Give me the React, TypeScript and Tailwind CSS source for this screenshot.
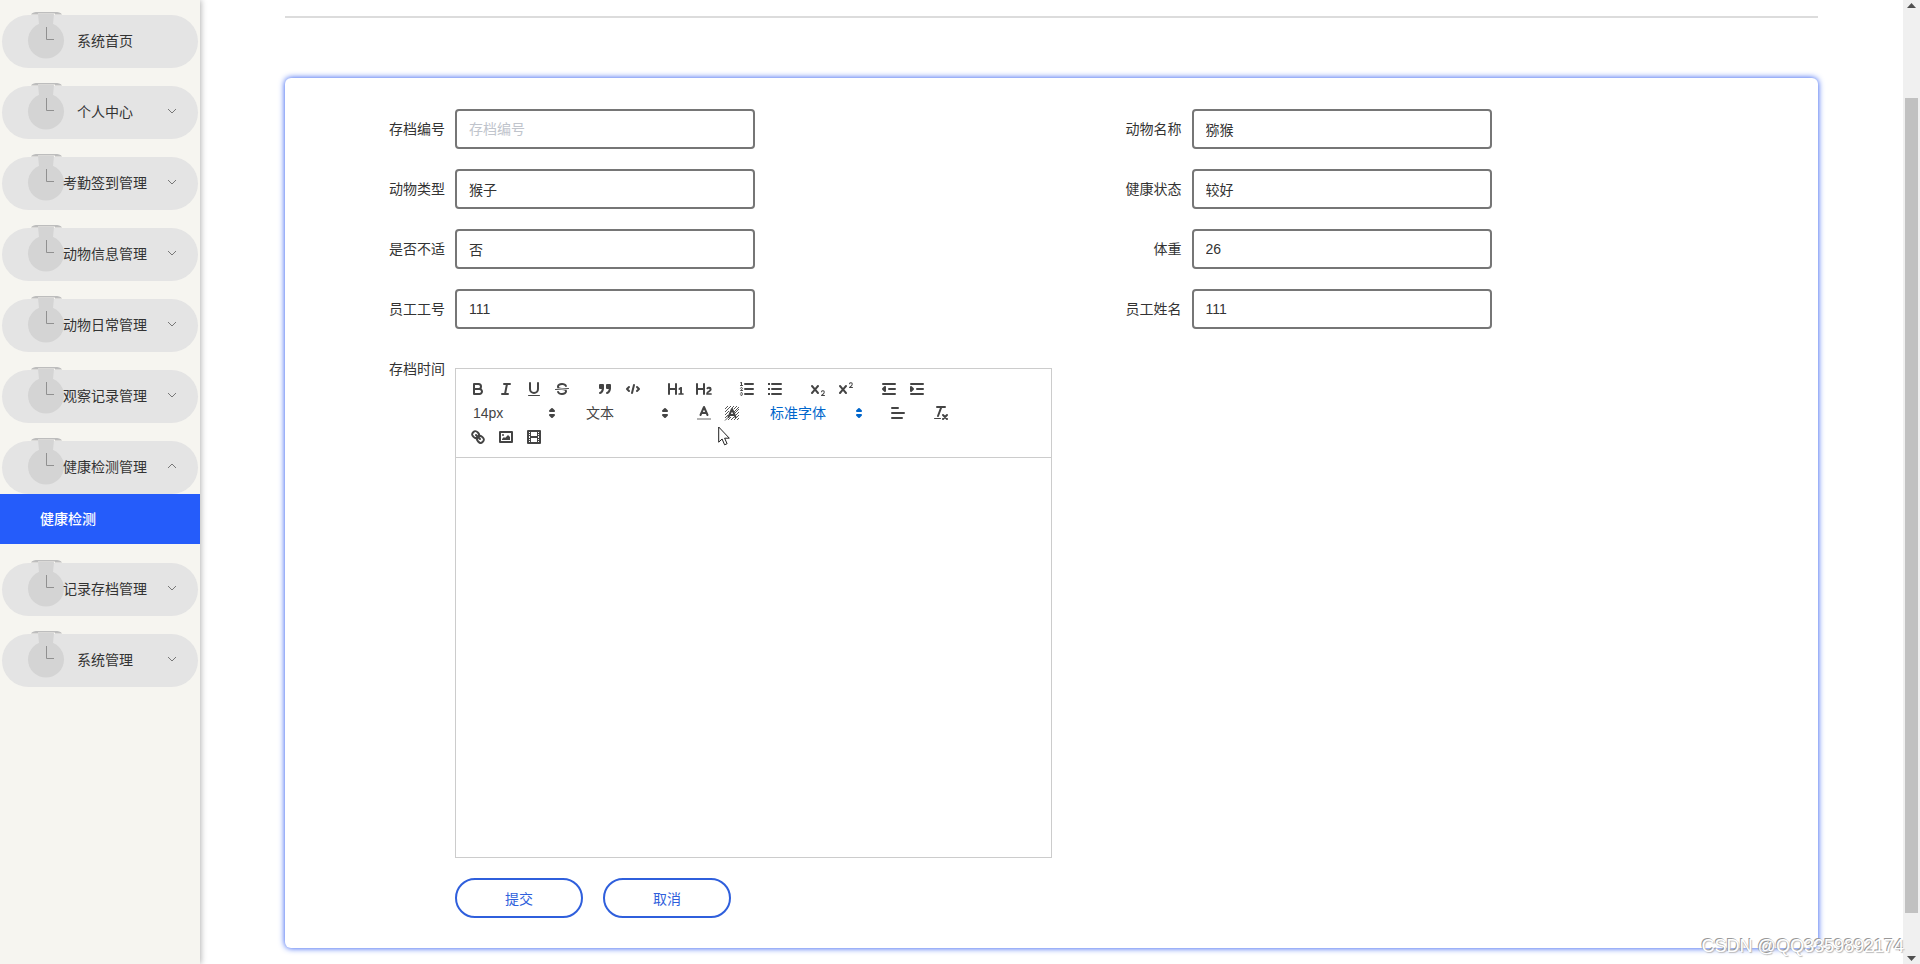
import { useId, useState } from "react";
import type { ReactNode } from "react";

const stroke = {
  fill: "none",
  stroke: "currentColor",
  strokeWidth: 2,
  strokeLinecap: "round",
  strokeLinejoin: "round",
} as const;
const thin = { ...stroke, strokeWidth: 1 } as const;
const solid = { fill: "currentColor" } as const;
const both = { ...stroke, fill: "currentColor" } as const;

const crossPath =
  "M9.65,5.241a1,1,0,0,0-1.409.108L6,7.964,3.759,5.349A1,1,0,0,0,2.192,6.59178Q2.21541,6.6213,2.241,6.649L4.684,9.5,2.241,12.35A1,1,0,0,0,3.71,13.70722q0.02557-.02768.049-0.05722L6,11.036,8.241,13.65a1,1,0,1,0,1.567-1.24277Q9.78459,12.3777,9.759,12.35L7.316,9.5,9.759,6.651A1,1,0,0,0,9.65,5.241Z";

const icons: Record<string, ReactNode> = {
  bold: (
    <g {...stroke}>
      <path d="M5,4H9.5A2.5,2.5,0,0,1,12,6.5v0A2.5,2.5,0,0,1,9.5,9H5V4Z" />
      <path d="M5,9h5.5A2.5,2.5,0,0,1,13,11.5v0A2.5,2.5,0,0,1,10.5,14H5V9Z" />
    </g>
  ),
  italic: (
    <g {...stroke}>
      <path d="M7 4H13M5 14H11M8 14L10 4" />
    </g>
  ),
  underline: (
    <g>
      <path {...stroke} d="M5,3V9a4.012,4.012,0,0,0,4,4H9a4.012,4.012,0,0,0,4-4V3" />
      <rect {...solid} height="1" rx="0.5" width="12" x="3" y="15" />
    </g>
  ),
  strike: (
    <g>
      <path {...thin} d="M15.5 8.5L2.5 9.5" />
      <path
        {...solid}
        d="M9.007,8C6.542,7.791,6,7.519,6,6.5,6,5.792,7.283,5,9,5c1.571,0,2.765.679,2.969,1.309a1,1,0,0,0,1.9-.617C13.356,4.106,11.354,3,9,3,6.2,3,4,4.538,4,6.5a3.2,3.2,0,0,0,.5,1.843Z"
      />
      <path
        {...solid}
        d="M8.984,10C11.457,10.208,12,10.479,12,11.5c0,.708-1.283,1.5-3,1.5-1.571,0-2.765-.679-2.969-1.309a1,1,0,1,0-1.9.617C4.644,13.894,6.646,15,9,15c2.8,0,5-1.538,5-3.5a3.2,3.2,0,0,0-.5-1.843Z"
      />
    </g>
  ),
  quote: (
    <g {...both}>
      <rect height="3" width="3" x="4" y="5" />
      <rect height="3" width="3" x="11" y="5" />
      <path d="M7,8c0,4.031-3,5-3,5" />
      <path d="M14,8c0,4.031-3,5-3,5" />
    </g>
  ),
  code: (
    <g {...stroke}>
      <path d="M5 7L3 9L5 11M13 7L15 9L13 11" />
      <path d="M10 5L8 13" />
    </g>
  ),
  h1: (
    <path
      {...solid}
      d="M10,4V14a1,1,0,0,1-2,0V10H3v4a1,1,0,0,1-2,0V4A1,1,0,0,1,3,4V8H8V4a1,1,0,0,1,2,0Zm6.06787,9.209H14.98975V7.59863a.54085.54085,0,0,0-.605-.60547h-.62744a1.01119,1.01119,0,0,0-.748.29688L11.645,8.56641a.5435.5435,0,0,0-.022.8584l.28613.30762a.53861.53861,0,0,0,.84717.0332l.09912-.08789a1.2137,1.2137,0,0,0,.2417-.35254h.02246s-.01123.30859-.01123.60547V13.209H12.041a.54085.54085,0,0,0-.605.60547v.43945a.54085.54085,0,0,0,.605.60547h4.02686a.54085.54085,0,0,0,.605-.60547v-.43945A.54085.54085,0,0,0,16.06787,13.209Z"
    />
  ),
  h2: (
    <path
      {...solid}
      d="M16.73975,13.81445v.43945a.54085.54085,0,0,1-.605.60547H11.855a.58392.58392,0,0,1-.64893-.60547V14.0127c0-2.90527,3.39941-3.42187,3.39941-4.55469a.77675.77675,0,0,0-.84717-.78125,1.17684,1.17684,0,0,0-.83594.38477c-.2749.26367-.561.374-.85791.13184l-.4292-.34082c-.30811-.24219-.38525-.51758-.1543-.81445a2.97155,2.97155,0,0,1,2.45361-1.17676,2.45393,2.45393,0,0,1,2.68408,2.40918c0,2.45312-3.1792,2.92676-3.27832,3.93848h2.79443A.54085.54085,0,0,1,16.73975,13.81445ZM9,3A.99974.99974,0,0,0,8,4V8H3V4A1,1,0,0,0,1,4V14a1,1,0,0,0,2,0V10H8v4a1,1,0,0,0,2,0V4A.99974.99974,0,0,0,9,3Z"
    />
  ),
  ordered: (
    <g>
      <path {...stroke} d="M7 4H15M7 9H15M7 14H15" />
      <path {...thin} d="M2.5 5.5H4.5" />
      <path
        {...solid}
        d="M3.5,6A0.5,0.5,0,0,1,3,5.5V3.085l-0.276.138A0.5,0.5,0,0,1,2.053,3c-0.124-.247-0.023-0.324.224-0.447l1-.5A0.5,0.5,0,0,1,4,2.5v3A0.5,0.5,0,0,1,3.5,6Z"
      />
      <path {...thin} d="M4.5,10.5h-2c0-.234,1.85-1.076,1.85-2.234A0.959,0.959,0,0,0,2.5,8.156" />
      <path
        {...thin}
        d="M2.5,14.846a0.959,0.959,0,0,0,1.85-.109A0.7,0.7,0,0,0,3.75,14a0.688,0.688,0,0,0,.6-0.736,0.959,0.959,0,0,0-1.85-.109"
      />
    </g>
  ),
  bullet: (
    <g>
      <path {...stroke} d="M6 4H15M6 9H15M6 14H15" />
      <path {...stroke} strokeLinecap="butt" d="M2 4H4M2 9H4M2 14H4" />
    </g>
  ),
  sub: (
    <g {...solid}>
      <path d="M15.5,15H13.861a3.858,3.858,0,0,0,1.914-2.975,1.8,1.8,0,0,0-1.6-1.751A1.921,1.921,0,0,0,12.021,11.7a0.50013,0.50013,0,1,0,.957.291h0a0.914,0.914,0,0,1,1.053-.725,0.81,0.81,0,0,1,.744.762c0,1.076-1.16971,1.86982-1.93971,2.43082A1.45639,1.45639,0,0,0,12,15.5a0.5,0.5,0,0,0,.5.5h3A0.5,0.5,0,0,0,15.5,15Z" />
      <path d={crossPath} />
    </g>
  ),
  sup: (
    <g {...solid}>
      <path d="M15.5,7H13.861a4.015,4.015,0,0,0,1.914-2.975,1.8,1.8,0,0,0-1.6-1.751A1.922,1.922,0,0,0,12.021,3.7a0.5,0.5,0,1,0,.957.291,0.917,0.917,0,0,1,1.053-.725,0.81,0.81,0,0,1,.744.762c0,1.077-1.164,1.925-1.934,2.486A1.423,1.423,0,0,0,12,7.5a0.5,0.5,0,0,0,.5.5h3A0.5,0.5,0,0,0,15.5,7Z" />
      <path d={crossPath} />
    </g>
  ),
  outdent: (
    <g>
      <path {...stroke} d="M3 14H15M3 4H15M9 9H15" />
      <path {...both} d="M5 7V11L3 9Z" />
    </g>
  ),
  indent: (
    <g>
      <path {...stroke} d="M3 14H15M3 4H15M9 9H15" />
      <path {...both} d="M3 7V11L5 9Z" />
    </g>
  ),
  color: (
    <g>
      <path stroke="currentColor" strokeWidth="2" opacity="0.4" d="M2 15H16" />
      <path {...stroke} d="M5.5 11L9 3L12.5 11M11.63 9H6.38" />
    </g>
  ),
  background: (
    <g>
      <path
        stroke="currentColor"
        strokeWidth="0.9"
        d="M2 5L5 2M2 8L8 2M2 11L6 7M2 14L5 11M2 16.5L5 13.5M5 16L8 13M8 16L11 13M11 16L16 11M14 16L16 14M12 9L16 5M13 11L16 8M9 4L11 2M11 5L14 2M11 8L16 3"
      />
      <path {...stroke} d="M5.5 13L9 5L12.5 13M11.63 11H6.38" />
    </g>
  ),
  align: <path {...stroke} d="M3 9H15M3 14H13M3 4H9" />,
  clean: (
    <g>
      <path {...stroke} d="M5 3H13M6 12L9.35 3M11 11L15 15M15 11L11 15" />
      <rect {...solid} height="1" rx="0.5" width="7" x="2" y="14" />
    </g>
  ),
  link: (
    <g {...stroke}>
      <path d="M7 7L11 11" />
      <path d="M8.9,4.577a3.476,3.476,0,0,1,.36,4.679A3.476,3.476,0,0,1,4.577,8.9C3.185,7.5,2.035,6.4,4.217,4.217S7.5,3.185,8.9,4.577Z" />
      <path d="M13.423,9.1a3.476,3.476,0,0,0-4.679-.36,3.476,3.476,0,0,0,.36,4.679c1.392,1.392,2.5,2.542,4.679.36S14.815,10.5,13.423,9.1Z" />
    </g>
  ),
  image: (
    <g>
      <rect {...stroke} height="10" width="12" x="3" y="4" />
      <circle {...solid} cx="6" cy="7" r="1" />
      <path {...solid} d="M5 12V11L7 9L8 10L11 7L13 9V12Z" />
    </g>
  ),
  video: (
    <g>
      <rect {...stroke} height="12" width="12" x="3" y="3" />
      <path
        {...solid}
        d="M5 3h1v12h-1zM12 3h1v12h-1zM5 8h8v2h-8zM3 5h3v1h-3zM3 7h3v1h-3zM3 10h3v1h-3zM3 12h3v1h-3zM12 5h3v1h-3zM12 7h3v1h-3zM12 10h3v1h-3zM12 12h3v1h-3z"
      />
    </g>
  ),
};

function ToolButton({ icon, label }: { icon: string; label: string }) {
  return (
    <button type="button" aria-label={label} className="flex h-6 w-7 items-center justify-center hover:text-[#06c]">
      <svg viewBox="0 0 18 18" className="size-[18px]">
        {icons[icon]}
      </svg>
    </button>
  );
}

function ToolGroup({ items }: { items: [string, string][] }) {
  return (
    <div className="mr-[15px] flex">
      {items.map(([icon, label]) => (
        <ToolButton key={icon} icon={icon} label={label} />
      ))}
    </div>
  );
}

function Picker({ label, options, className }: { label: string; options: string[]; className: string }) {
  return (
    <div className={`relative mr-[15px] h-6 ${className}`}>
      <select aria-label={label} className="h-6 w-full cursor-pointer appearance-none bg-transparent pr-5 pl-[9px] text-sm leading-6 outline-none">
        {options.map((o) => (
          <option key={o}>{o}</option>
        ))}
      </select>
      <svg viewBox="0 0 18 18" className="pointer-events-none absolute top-[3px] right-px size-[18px]">
        <path {...both} d="M7 11L9 13L11 11ZM7 7L9 5L11 7Z" />
      </svg>
    </div>
  );
}

function Editor() {
  return (
    <div className="min-w-0 flex-1 text-[#444]">
      <div className="relative flex flex-wrap border border-[#ccc] p-2">
        <ToolGroup items={[["bold", "粗体"], ["italic", "斜体"], ["underline", "下划线"], ["strike", "删除线"]]} />
        <ToolGroup items={[["quote", "引用"], ["code", "代码"]]} />
        <ToolGroup items={[["h1", "标题1"], ["h2", "标题2"]]} />
        <ToolGroup items={[["ordered", "有序列表"], ["bullet", "无序列表"]]} />
        <ToolGroup items={[["sub", "下标"], ["sup", "上标"]]} />
        <ToolGroup items={[["outdent", "减少缩进"], ["indent", "增加缩进"]]} />
        <Picker label="字号" options={["14px", "16px", "18px"]} className="w-[98px]" />
        <Picker label="段落" options={["文本", "标题1", "标题2"]} className="w-[98px]" />
        <ToolGroup items={[["color", "文字颜色"], ["background", "背景颜色"]]} />
        <Picker label="字体" options={["标准字体", "衬线字体", "等宽字体"]} className="w-[108px] text-[#06c]" />
        <ToolGroup items={[["align", "对齐"]]} />
        <ToolGroup items={[["clean", "清除格式"]]} />
        <ToolGroup items={[["link", "链接"], ["image", "图片"], ["video", "视频"]]} />
        <svg viewBox="0 0 12 20" className="pointer-events-none absolute top-[57px] left-[262px] h-5 w-3">
          <path d="M.7 1V16.2L4.1 13L6.6 18.8L9.1 17.7L6.6 12.2H11.3Z" fill="#fff" stroke="#222" strokeWidth="1" />
        </svg>
      </div>
      <textarea
        id="archive-time"
        className="block h-[400px] w-full resize-none border border-t-0 border-[#ccc] px-[15px] py-3 text-sm outline-none"
      />
    </div>
  );
}

function Field({ label, value, placeholder }: { label: string; value: string; placeholder?: string }) {
  const id = useId();
  return (
    <div className="flex items-center">
      <label htmlFor={id} className="w-[140px] shrink-0 pr-[10px] text-right">
        {label}
      </label>
      <input
        id={id}
        type="text"
        defaultValue={value}
        placeholder={placeholder}
        className="h-10 w-[300px] rounded border-2 border-[#767676] bg-white px-3 text-sm text-[#333] outline-none placeholder:text-[#c0c4cc]"
      />
    </div>
  );
}

function StopwatchIcon() {
  return (
    <svg viewBox="0 0 40 50" className="absolute -top-1 left-[25px] h-[50px] w-10">
      <path d="M11 3H27L26 13H12Z" fill="#d4d4d4" />
      <circle cx="19" cy="29.500" r="18" fill="#d4d4d4" />
      <path d="M4 3.500C5 1.500 8 1 11 1H28C31 1 34 1.500 35 3.500H28V2.600H11V3.500Z" fill="#bdbdbd" />
      <path d="M19.500 16V28.500H27" fill="none" stroke="#909090" strokeWidth="1" />
    </svg>
  );
}

function Chevron({ up }: { up: boolean }) {
  return (
    <svg viewBox="0 0 10 6" className="absolute top-[22px] right-[21px] h-1.5 w-2.5">
      <path d={up ? "M1 5L5 1L9 5" : "M1 1L5 5L9 1"} fill="none" stroke="#777" strokeWidth="1" />
    </svg>
  );
}

const menu: { title: string; child?: string; leaf?: boolean }[] = [
  { title: "系统首页", leaf: true },
  { title: "个人中心" },
  { title: "考勤签到管理" },
  { title: "动物信息管理" },
  { title: "动物日常管理" },
  { title: "观察记录管理" },
  { title: "健康检测管理", child: "健康检测" },
  { title: "记录存档管理" },
  { title: "系统管理" },
];

function Sidebar() {
  const [open, setOpen] = useState("健康检测管理");
  return (
    <nav className="z-10 w-[200px] shrink-0 bg-[#f6f5f0] pt-[15px] shadow-[1px_0_6px_rgba(0,0,0,0.3)]">
      <ul>
        {menu.map(({ title, child, leaf }) => (
          <li key={title} className="mb-[18px]">
            <button
              type="button"
              onClick={() => setOpen(open === title ? "" : title)}
              className="relative mx-0.5 block h-[53px] w-[196px] rounded-full bg-[#e4e4e4] pb-0.5 pl-[10px] text-center text-sm text-[#333]"
            >
              <StopwatchIcon />
              <span className="relative">{title}</span>
              {!leaf && <Chevron up={open === title} />}
            </button>
            {child && open === title && (
              <a href="#health" className="mb-[19px] block h-[50px] bg-[#255cfa] pl-10 text-sm leading-[50px] font-medium text-white">
                {child}
              </a>
            )}
          </li>
        ))}
      </ul>
    </nav>
  );
}

function Scrollbar() {
  return (
    <div aria-hidden="true" className="flex w-[17px] shrink-0 flex-col items-center bg-[#f0f0f0]">
      <svg viewBox="0 0 9 5" className="mt-[3px] h-[5px] w-[9px]">
        <path d="M0 5L4.500 0L9 5Z" fill="#505050" />
      </svg>
      <div className="mt-[90px] mb-[43px] w-[13px] flex-1 bg-[#c1c1c1]" />
      <svg viewBox="0 0 9 5" className="mb-[3px] h-[5px] w-[9px]">
        <path d="M0 0L4.500 5L9 0Z" fill="#505050" />
      </svg>
    </div>
  );
}

const actionClass =
  "h-10 w-32 rounded-full border-2 border-[#2f5fdc] bg-white pt-0.5 text-sm text-[#2f5fdc] hover:bg-[#eef3ff]";

export default function App() {
  return (
    <div className="relative flex h-screen overflow-hidden bg-white font-['Liberation_Sans','Noto_Sans_CJK_SC',sans-serif] text-sm text-[#333]">
      <Sidebar />
      <main className="min-w-0 flex-1 px-[85px] pt-4">
        <hr className="border-t-2 border-[#dcdcdc]" />
        <form
          className="mt-[60px] rounded-md bg-white px-[30px] pt-[31px] pb-[30px] shadow-[0_0_6px_#1f4ff0]"
          onSubmit={(e) => e.preventDefault()}
        >
          <div className="grid grid-cols-2 gap-y-5">
            <Field label="存档编号" value="" placeholder="存档编号" />
            <Field label="动物名称" value="猕猴" />
            <Field label="动物类型" value="猴子" />
            <Field label="健康状态" value="较好" />
            <Field label="是否不适" value="否" />
            <Field label="体重" value="26" />
            <Field label="员工工号" value="111" />
            <Field label="员工姓名" value="111" />
            <div className="mt-[19px] flex items-start">
              <label htmlFor="archive-time" className="-mt-[9px] w-[140px] shrink-0 pr-[10px] text-right">
                存档时间
              </label>
              <Editor />
            </div>
          </div>
          <div className="mt-5 flex gap-5 pl-[140px]">
            <button type="submit" className={actionClass}>
              提交
            </button>
            <button type="button" className={actionClass}>
              取消
            </button>
          </div>
        </form>
      </main>
      <Scrollbar />
      <p className="pointer-events-none absolute right-4 bottom-1 z-20 text-lg leading-7 text-white [text-shadow:-1px_-1px_0_#999,1px_1px_1px_#bbb]">
        CSDN @QQ3359892174
      </p>
    </div>
  );
}
